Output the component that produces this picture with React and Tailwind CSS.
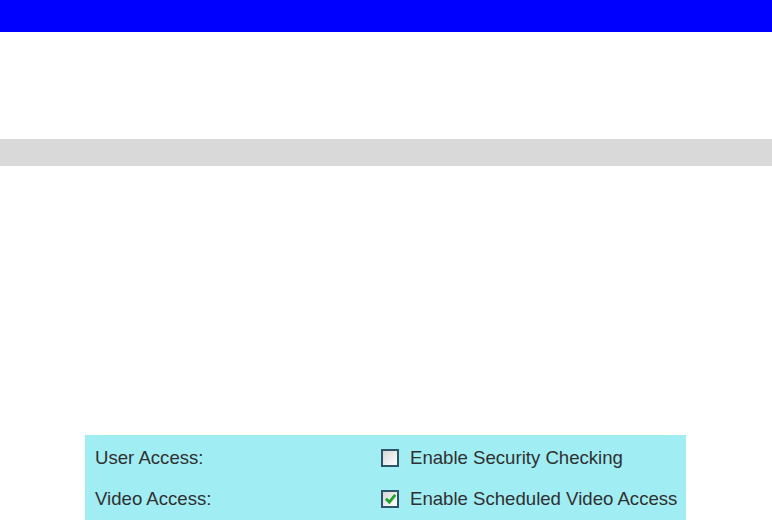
import React from 'react';

const ROWS = [
  { label: 'User Access:', option: 'Enable Security Checking', checked: false },
  { label: 'Video Access:', option: 'Enable Scheduled Video Access', checked: true }
];

function Box({ checked }) {
  return (
    <span className="flex items-center justify-center w-[18px] h-[18px] border-2 border-[#2d5468] bg-gradient-to-br from-[#d6d6d6] to-white">
      {checked && (
        <svg width="13" height="13" viewBox="0 0 12 12">
          <path d="M1.8 6.3 L4.9 9.3 L10.4 2.6" fill="none" stroke="#22a02a" strokeWidth="2.6" />
        </svg>
      )}
    </span>
  );
}

export default function App() {
  return (
    <div className="w-[772px] h-[520px] overflow-hidden bg-white" style={{ fontFamily: '"Liberation Sans", Arial, sans-serif' }}>
      <div className="h-[32px] bg-[#0000ff]" />
      <div className="h-[107px]" />
      <div className="h-[27px] bg-[#d9d9d9]" />
      <div className="h-[269px]" />
      <div className="ml-[85px] w-[601px] h-[90px] bg-[#a0eef4] pt-[2px] text-[#303030] text-[18.6px]">
        {ROWS.map(r => (
          <div key={r.label} className="flex items-center h-[41px] pl-[10px]">
            <span className="w-[286px]">{r.label}</span>
            <Box checked={r.checked} />
            <span className="ml-[11px]">{r.option}</span>
          </div>
        ))}
      </div>
    </div>
  );
}
